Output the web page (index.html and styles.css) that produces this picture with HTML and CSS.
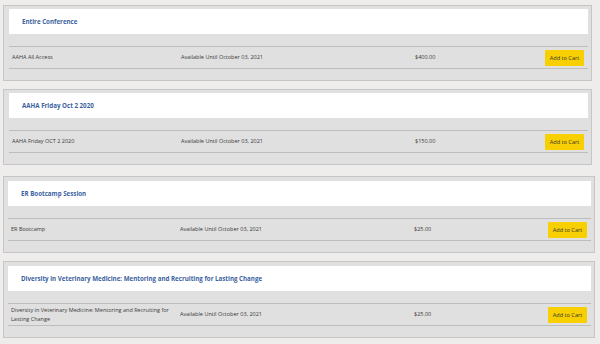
FILE: index.html
```html
<!DOCTYPE html>
<html lang="en">
<head>
<meta charset="utf-8">
<title>Sessions</title>
<link rel="stylesheet" href="styles.css">
</head>
<body>
<div class="list">
  <section class="panel">
    <div class="panel-head"><h2 class="panel-title">Entire Conference</h2></div>
    <div class="row">
      <div class="col-name">AAHA All Access</div>
      <div class="col-date">Available Until October 03, 2021</div>
      <div class="col-price">$400.00</div>
      <div class="col-action"><button class="btn-cart">Add to Cart</button></div>
    </div>
  </section>
  <section class="panel">
    <div class="panel-head"><h2 class="panel-title">AAHA Friday Oct 2 2020</h2></div>
    <div class="row">
      <div class="col-name">AAHA Friday OCT 2 2020</div>
      <div class="col-date">Available Until October 03, 2021</div>
      <div class="col-price">$150.00</div>
      <div class="col-action"><button class="btn-cart">Add to Cart</button></div>
    </div>
  </section>
  <section class="panel panel-wide panel-spaced">
    <div class="panel-head"><h2 class="panel-title">ER Bootcamp Session</h2></div>
    <div class="row">
      <div class="col-name">ER Bootcamp</div>
      <div class="col-date">Available Until October 03, 2021</div>
      <div class="col-price">$25.00</div>
      <div class="col-action"><button class="btn-cart">Add to Cart</button></div>
    </div>
  </section>
  <section class="panel panel-wide">
    <div class="panel-head"><h2 class="panel-title">Diversity in Veterinary Medicine: Mentoring and Recruiting for Lasting Change</h2></div>
    <div class="row">
      <div class="col-name">Diversity in Veterinary Medicine: Mentoring and Recruiting for Lasting Change</div>
      <div class="col-date">Available Until October 03, 2021</div>
      <div class="col-price">$25.00</div>
      <div class="col-action"><button class="btn-cart">Add to Cart</button></div>
    </div>
  </section>
</div>
</body>
</html>
```
FILE: styles.css
```css
html, body {
  margin: 0;
  padding: 0;
}
body {
  background: #efedec;
  font-family: "Open Sans", "Liberation Sans", sans-serif;
  color: #3a3a3a;
}
.list {
  display: flex;
  flex-direction: column;
  gap: 8px;
  padding: 5px 8px 0 3px;
}
.panel {
  background: #e0e0e0;
  border: 1px solid #c6c6c6;
  padding: 3px 3px 11px 5px;
}
.panel-wide {
  margin-right: -3px;
  padding-top: 4px;
  padding-left: 4px;
}
.panel-spaced {
  margin-top: 3px;
}
.panel-head {
  background: #ffffff;
  height: 25px;
  display: flex;
  align-items: center;
  padding-left: 13px;
}
.panel-title {
  margin: 0;
  font-size: 6.2px;
  font-weight: 700;
  color: #3b5fa0;
}
.row {
  margin-top: 12px;
  border-top: 1px solid #bdbdbd;
  border-bottom: 1px solid #bdbdbd;
  min-height: 21px;
  display: flex;
  align-items: center;
  font-size: 5.5px;
  line-height: 9px;
}
.col-name {
  width: 165px;
  padding-left: 3px;
  margin-right: 4px;
}
.col-date {
  width: 234px;
}
.col-price {
  flex: 1;
}
.col-action {
  padding-right: 4px;
}
.btn-cart {
  display: block;
  width: 39px;
  height: 16px;
  padding: 0;
  border: 0;
  border-radius: 1px;
  background: #f8cf00;
  color: #333333;
  font-family: "Open Sans", "Liberation Sans", sans-serif;
  font-size: 5.6px;
}
```
